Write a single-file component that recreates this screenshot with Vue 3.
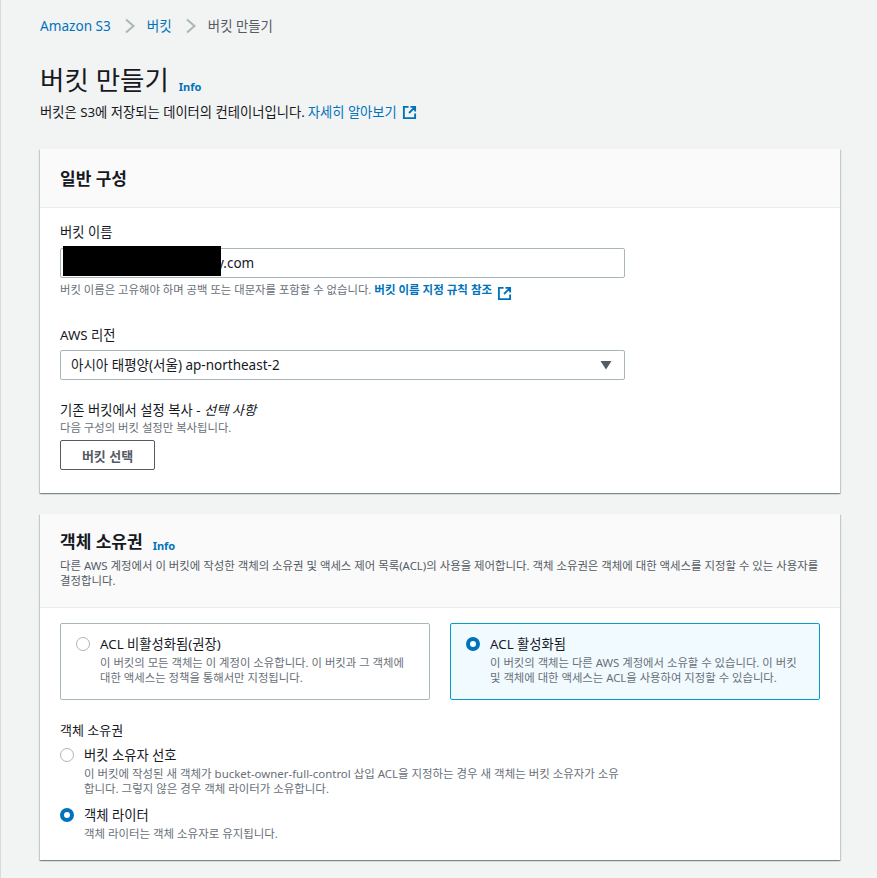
<script setup>
const ownershipCards = [
  {
    title: 'ACL 비활성화됨(권장)',
    text: '이 버킷의 모든 객체는 이 계정이 소유합니다. 이 버킷과 그 객체에 대한 액세스는 정책을 통해서만 지정됩니다.',
    selected: false,
  },
  {
    title: 'ACL 활성화됨',
    text: '이 버킷의 객체는 다른 AWS 계정에서 소유할 수 있습니다. 이 버킷 및 객체에 대한 액세스는 ACL을 사용하여 지정할 수 있습니다.',
    selected: true,
  },
]

const ownerOptions = [
  {
    title: '버킷 소유자 선호',
    text: '이 버킷에 작성된 새 객체가 bucket-owner-full-control 삽입 ACL을 지정하는 경우 새 객체는 버킷 소유자가 소유합니다. 그렇지 않은 경우 객체 라이터가 소유합니다.',
    selected: false,
  },
  {
    title: '객체 라이터',
    text: '객체 라이터는 객체 소유자로 유지됩니다.',
    selected: true,
  },
]
</script>

<template>
  <div class="page">
    <nav class="crumbs">
      <a class="link">Amazon S3</a>
      <svg class="chevron" viewBox="0 0 12 16"><path d="M2 1.5l7.5 6.5-7.5 6.5" /></svg>
      <a class="link">버킷</a>
      <svg class="chevron" viewBox="0 0 12 16"><path d="M2 1.5l7.5 6.5-7.5 6.5" /></svg>
      <span class="crumb-current">버킷 만들기</span>
    </nav>

    <div class="title-row">
      <h1>버킷 만들기</h1>
      <a class="info">Info</a>
    </div>
    <p class="page-desc">
      버킷은 S3에 저장되는 데이터의 컨테이너입니다.
      <a class="link">자세히 알아보기</a>
      <svg class="external big" viewBox="0 0 16 16"><path d="M7 2H2v12h12V9M9 2h5v5M14 2L7.5 8.5" /></svg>
    </p>

    <section class="card general">
      <header class="card-head">
        <h2>일반 구성</h2>
      </header>
      <div class="card-body">
        <label class="field-label">버킷 이름</label>
        <div class="input-wrap">
          <div class="input masked">y.com</div>
          <div class="redact"></div>
        </div>
        <p class="hint name-hint">
          버킷 이름은 고유해야 하며 공백 또는 대문자를 포함할 수 없습니다.
          <a class="hint-link">버킷 이름 지정 규칙 참조</a>
          <svg class="external small" viewBox="0 0 16 16"><path d="M7 2H2v12h12V9M9 2h5v5M14 2L7.5 8.5" /></svg>
        </p>

        <label class="field-label region-label">AWS 리전</label>
        <div class="input select">
          <span>아시아 태평양(서울) ap-northeast-2</span>
          <svg class="caret" viewBox="0 0 12 10"><path d="M0.5 1h11L6 9.5z" /></svg>
        </div>

        <label class="field-label copy-label">기존 버킷에서 설정 복사 - <em>선택 사항</em></label>
        <p class="hint">다음 구성의 버킷 설정만 복사됩니다.</p>
        <button class="btn">버킷 선택</button>
      </div>
    </section>

    <section class="card ownership">
      <header class="card-head tall">
        <div class="title-row small">
          <h2>객체 소유권</h2>
          <a class="info">Info</a>
        </div>
        <p class="head-desc">다른 AWS 계정에서 이 버킷에 작성한 객체의 소유권 및 액세스 제어 목록(ACL)의 사용을 제어합니다. 객체 소유권은 객체에 대한 액세스를 지정할 수 있는 사용자를 결정합니다.</p>
      </header>
      <div class="card-body ownership-body">
        <div class="tiles">
          <div v-for="card in ownershipCards" :key="card.title" class="tile" :class="{ on: card.selected }">
            <span class="radio" :class="{ on: card.selected }"></span>
            <div>
              <div class="option-title">{{ card.title }}</div>
              <div class="option-text tile-text">{{ card.text }}</div>
            </div>
          </div>
        </div>

        <label class="field-label owner-label">객체 소유권</label>
        <div class="owner-list">
          <div v-for="option in ownerOptions" :key="option.title" class="owner">
            <span class="radio" :class="{ on: option.selected }"></span>
            <div>
              <div class="option-title">{{ option.title }}</div>
              <div class="option-text owner-text">{{ option.text }}</div>
            </div>
          </div>
        </div>
      </div>
    </section>
  </div>
</template>

<style>
html, body {
  margin: 0;
  background: #f2f3f3;
}
</style>

<style scoped>
.page {
  box-sizing: border-box;
  width: 877px;
  height: 878px;
  overflow: hidden;
  padding: 0 37px 0 39px;
  border-left: 1px solid #d5dbdb;
  font-family: "Noto Sans", "Noto Sans CJK KR", sans-serif;
  font-size: 13.3px;
  color: #16191f;
}

.crumbs {
  display: flex;
  align-items: center;
  height: 20px;
  padding-top: 16px;
  font-size: 13.6px;
  line-height: 20px;
}

.link {
  color: #0073bb;
}

.chevron {
  width: 12px;
  height: 16px;
  margin: 0 11px 0 13px;
  fill: none;
  stroke: #aab7b8;
  stroke-width: 2;
}

.crumb-current {
  font-size: 13.4px;
  color: #545b64;
}

.title-row {
  display: flex;
  align-items: flex-end;
  margin-top: 27px;
}

h1 {
  margin: 0;
  font-size: 26.5px;
  line-height: 34px;
  font-weight: 400;
}

.info {
  margin: 0 0 2px 10px;
  font-size: 11px;
  line-height: 16px;
  font-weight: 700;
  color: #0073bb;
}

.page-desc {
  display: flex;
  align-items: center;
  gap: 3px;
  margin: 5px 0 0;
  line-height: 20px;
}

.external {
  fill: none;
  stroke: #0073bb;
  stroke-width: 2;
}

.external.big {
  width: 15px;
  height: 15px;
  margin-left: 2px;
}

.external.small {
  width: 15px;
  height: 15px;
  margin: -4px 0 -4px 5px;
  vertical-align: -3px;
}

.card {
  background: #fff;
  box-shadow: 0 1px 1px 0 rgba(0, 28, 36, 0.3), 1px 1px 1px 0 rgba(0, 28, 36, 0.15), -1px 1px 1px 0 rgba(0, 28, 36, 0.15);
}

.general {
  height: 344px;
  margin-top: 27px;
}

.ownership {
  height: 346px;
  margin-top: 21px;
}

.card-head {
  box-sizing: border-box;
  height: 59px;
  padding: 19px 20px 0;
  background: #fafafa;
  border-bottom: 1px solid #eaeded;
}

.card-head.tall {
  height: 94px;
  padding-top: 17px;
}

h2 {
  margin: 0;
  font-size: 17px;
  line-height: 22px;
  font-weight: 700;
}

.title-row.small {
  margin-top: 0;
}

.title-row.small .info {
  margin-bottom: -1px;
}

.head-desc {
  margin: 5px 0 0;
  font-size: 11.4px;
  line-height: 15px;
  color: #545b64;
}

.card-body {
  padding: 14px 20px 0;
}

.field-label {
  display: block;
  font-size: 13.3px;
  line-height: 20px;
}

.input-wrap {
  position: relative;
  margin-top: 6px;
}

.input {
  box-sizing: border-box;
  width: 565px;
  height: 30px;
  padding: 0 10px;
  line-height: 28px;
  font-size: 13.5px;
  border: 1px solid #aab7b8;
  border-radius: 2px;
  background: #fff;
}

.input.masked {
  padding-left: 156px;
}

.redact {
  position: absolute;
  left: 3px;
  top: -2px;
  width: 158px;
  height: 30px;
  background: #000;
}

.hint {
  margin: 0;
  font-size: 11.35px;
  line-height: 16px;
  color: #687078;
}

.name-hint {
  margin-top: 4px;
}

.hint-link {
  color: #0073bb;
  font-size: 11.5px;
  font-weight: 700;
}

.region-label {
  margin-top: 27px;
}

.select {
  display: flex;
  align-items: center;
  justify-content: space-between;
  margin-top: 5px;
  padding-right: 12px;
}

.caret {
  width: 12px;
  height: 10px;
  fill: #545b64;
}

.copy-label {
  margin-top: 20px;
}

.copy-label em {
  font-style: italic;
}

.btn {
  display: block;
  box-sizing: border-box;
  width: 95px;
  height: 30px;
  margin-top: 4px;
  padding: 0;
  font-family: inherit;
  font-size: 13px;
  font-weight: 700;
  color: #545b64;
  background: #fff;
  border: 1px solid #545b64;
  border-radius: 2px;
}

.ownership-body {
  padding-top: 15px;
}

.tiles {
  display: grid;
  grid-template-columns: 370px 370px;
  gap: 20px;
}

.tile {
  display: flex;
  gap: 10px;
  box-sizing: border-box;
  height: 77px;
  padding: 11px 15px;
  border: 1px solid #aab7b8;
  border-radius: 2px;
}

.tile.on {
  background: #f1faff;
  border-color: #00a1c9;
}

.radio {
  flex: none;
  box-sizing: border-box;
  width: 14px;
  height: 14px;
  margin-top: 2px;
  border: 1px solid #aab7b8;
  border-radius: 50%;
  background: #fff;
}

.radio.on {
  border: 4px solid #0073bb;
}

.option-title {
  font-size: 13.3px;
  line-height: 18px;
}

.option-text {
  margin-top: 2px;
  font-size: 11.35px;
  line-height: 15px;
  color: #687078;
}

.tile-text {
  width: 315px;
}

.owner-label {
  margin-top: 20px;
  font-size: 13px;
}

.owner-list {
  display: flex;
  flex-direction: column;
  gap: 10px;
  margin-top: 6px;
}

.owner {
  display: flex;
  gap: 10px;
}

.owner-text {
  width: 540px;
  font-size: 11.45px;
}
</style>
